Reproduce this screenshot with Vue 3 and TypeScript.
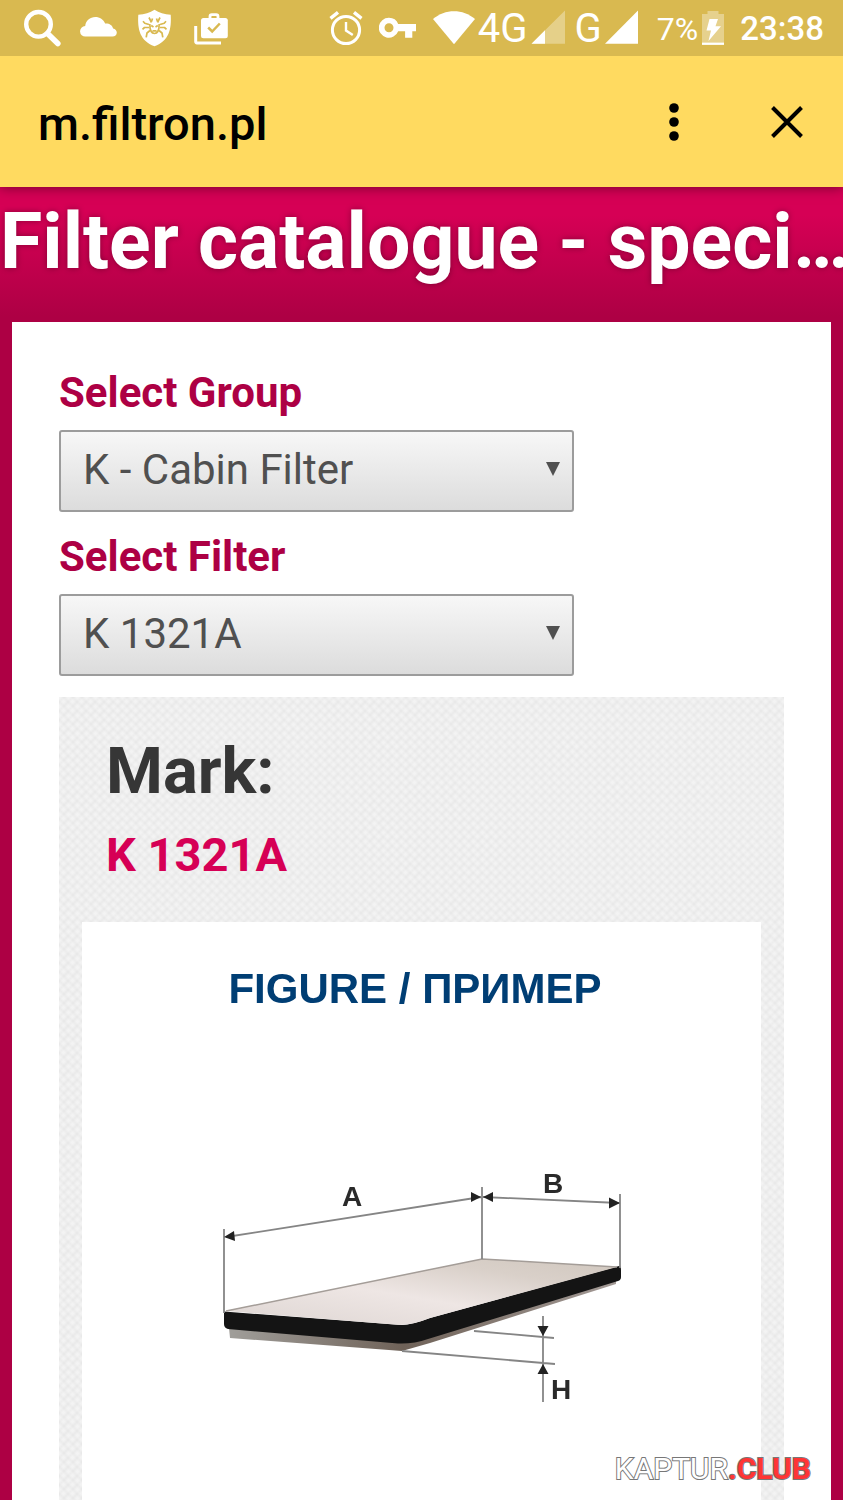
<script setup lang="ts">
import { ref } from 'vue'

interface Field {
  id: string
  label: string
  options: string[]
}

const fields: Field[] = [
  { id: 'group', label: 'Select Group', options: ['K - Cabin Filter'] },
  { id: 'filter', label: 'Select Filter', options: ['K 1321A'] },
]

const values = ref<Record<string, string>>({
  group: 'K - Cabin Filter',
  filter: 'K 1321A',
})

const legs = [0, 1]
</script>

<template>
  <div class="screen">
    <div class="status">
      <div class="notices">
        <svg viewBox="24 9 38 38" width="38" height="38" fill="none" stroke="#fff">
          <circle cx="38.5" cy="24.3" r="12.3" stroke-width="4.4" />
          <path d="M47.5 33.5L57.8 43.6" stroke-width="5.6" stroke-linecap="round" />
        </svg>
        <svg viewBox="80 9 38 38" width="38" height="38" fill="#fff">
          <path d="M85.5 36.6a5.3 5.3 0 0 1-.3-10.6C85.800 20.500 90 17 95.300 17c4.500 0 8.200 2.600 9.800 6.500 4.300-.3 7.300 1.800 8 4.900 2.200.4 3.700 2 3.700 4.100 0 2.400-1.800 4.100-4.300 4.100z" />
        </svg>
        <svg viewBox="136 9 38 38" width="38" height="38">
          <path d="M154.500 9.800c4.500 3.100 10 4.600 16.200 5 .9 14.500-1.500 26-16.200 31.500-14.700-5.500-17.100-17-16.200-31.500 6.200-.4 11.700-1.900 16.200-5z" fill="#fff" />
          <g fill="none" stroke="#d9b950" stroke-width="1.700" stroke-linejoin="round">
            <path
              v-for="leg in legs"
              :key="leg"
              :transform="leg ? 'translate(309 0) scale(-1 1)' : undefined"
              d="M149 24.500l-4.200-1.300-1.800-2M149.200 27.500h-4.700l-2 1.800M150 30.500l-3 2.500-.8 4.300M151.500 22.500l-2.500-5"
            />
            <path d="M149.800 24c0 6.500 2 9.500 4.700 9.500s4.700-3 4.700-9.500M151.200 25.500l2.300 1.500M157.800 25.500l-2.300 1.500M152.500 30.800h4" />
            <path d="M151.500 21.500l1-3M157.500 21.500l-1-3" />
          </g>
        </svg>
        <svg viewBox="192 9 38 38" width="38" height="38" fill="none">
          <path d="M195.700 26v15.600q0 1.300 1.300 1.300h24" stroke="#fff" stroke-width="3" />
          <path d="M210 19v-2.500q0-1.800 1.800-1.800h4.400q1.800 0 1.800 1.800V19" stroke="#fff" stroke-width="2.800" />
          <rect x="201" y="18" width="26.800" height="20.200" rx="2.500" fill="#fff" />
          <path d="M208.200 27.500l4 4 7.600-8" stroke="#d9b950" stroke-width="2.500" />
        </svg>
      </div>

      <div class="device">
        <svg class="alarm" viewBox="330 9 34 38" width="34" height="38" fill="none" stroke="#fff">
          <circle cx="347" cy="30" r="13.600" stroke-width="3" />
          <path d="M347 22v8.500l6.800 4.500" stroke-width="2.400" />
          <path d="M331.500 18.300l7.500-6M362.500 18.300l-7.500-6" stroke-width="3.400" />
        </svg>
        <svg class="key" viewBox="380 9 38 38" width="38" height="38" fill="#fff">
          <path fill-rule="evenodd" d="M390 17.700a10 10 0 0 1 9.200 6.300H417v7.200h-3.700v6.500h-7.200v-6.500h-6.900A10 10 0 1 1 390 17.700zm0 5.500a4.500 4.500 0 1 0 0 9 4.500 4.500 0 1 0 0-9z" />
        </svg>
        <svg class="wifi" viewBox="433 9 42 38" width="42" height="38" fill="#fff">
          <path d="M433 19c12-10.500 30-10.500 42 0l-21 25.300z" />
        </svg>
        <span class="network">4G</span>
        <svg class="signal" viewBox="529 9 34 38" width="34" height="38" fill="#fff">
          <path d="M529.500 43.700L563 10.500v33.200z" opacity=".33" />
          <path d="M529.500 43.700L543 30.300v13.400z" />
        </svg>
        <span class="network second">G</span>
        <svg class="signal" viewBox="604 9 34 38" width="34" height="38" fill="#fff">
          <path d="M604 43.700L637 10.500v33.200z" />
        </svg>
        <span class="percent">7%</span>
        <svg class="battery" viewBox="702 9 22 38" width="22" height="38" fill="#fff">
          <path d="M702 14h5.500v-3h11v3h5.500v28.500h-22z" opacity=".35" />
          <path d="M702 42.500h22v2.400h-22z" />
          <path d="M709.500 19h8.500l-2.500 7.300h5.500L708.500 41l2.500-10.500h-4.500z" />
        </svg>
        <span class="clock">23:38</span>
      </div>
    </div>

    <header class="bar">
      <span class="address">m.filtron.pl</span>
      <button class="tool" type="button" aria-label="Menu">
        <svg viewBox="0 0 40 40" width="40" height="40">
          <circle cx="20" cy="6" r="4.800" />
          <circle cx="20" cy="20" r="4.800" />
          <circle cx="20" cy="34" r="4.800" />
        </svg>
      </button>
      <button class="tool close" type="button" aria-label="Close">
        <svg viewBox="0 0 40 40" width="40" height="40" fill="none" stroke="#000" stroke-width="4">
          <path d="M5.500 5.500l29 29M34.500 5.500l-29 29" />
        </svg>
      </button>
    </header>

    <main class="page">
      <h1 class="title">Filter catalogue - speci…</h1>
      <section class="panel">
        <div v-for="field in fields" :key="field.id" class="field">
          <label :for="field.id">{{ field.label }}</label>
          <div class="picker">
            <select :id="field.id" v-model="values[field.id]">
              <option v-for="option in field.options" :key="option">{{ option }}</option>
            </select>
            <svg class="arrow" viewBox="0 0 14 14" width="14" height="14">
              <path d="M0 0h14L7 14z" fill="#505050" />
            </svg>
          </div>
        </div>

        <article class="card">
          <h2>Mark:</h2>
          <p class="mark">{{ values.filter }}</p>
          <div class="figure">
            <svg viewBox="82 922 679 578" role="img" aria-label="Cabin filter dimensions">
              <defs>
                <linearGradient id="sheet" x1="0" y1="1" x2="1" y2="0">
                  <stop offset="0" stop-color="#ddd5d2" />
                  <stop offset=".45" stop-color="#eee6e4" />
                  <stop offset=".75" stop-color="#d9d0c9" />
                  <stop offset="1" stop-color="#d0c7be" />
                </linearGradient>
                <linearGradient id="base" x1="0" y1="0" x2="1" y2="0">
                  <stop offset="0" stop-color="#a09e9a" />
                  <stop offset=".45" stop-color="#6f6258" />
                  <stop offset="1" stop-color="#a39a96" />
                </linearGradient>
              </defs>
              <g class="soft">
                <text class="caption" x="415" y="1003" text-anchor="middle">FIGURE / ПРИМЕР</text>
                <path d="M229 1328L404 1343 616 1276v8L430 1343 402 1351 230 1338z" fill="url(#base)" />
                <path d="M224 1311.500L402 1325 Q412 1325 430 1318L619 1266q2 0 2 4v7q0 3-3 4L428 1339q-14 5-30 4.500L228 1329q-4-1-4-5z" fill="#141414" />
                <path d="M226 1311L482 1259 617 1267 430 1318q-18 7-30 7z" fill="url(#sheet)" />
                <path d="M226 1311L482 1259 617 1267" fill="none" stroke="#a49d98" stroke-width="1.500" />
                <g fill="none" stroke="#858585" stroke-width="1.800">
                  <path d="M224 1229v84M482 1187v72M620 1194v74M226 1237L481 1197M483 1197L619 1203" />
                  <path d="M543 1316v86M474 1331L554 1338M402 1351L555 1364" />
                </g>
                <g fill="#222">
                  <path d="M224 1237l10-6 1 10zM481 1197l-10-5v10zM483 1197l10-5v10zM620 1203l-11-5.500v11zM543 1336l-5.500-10h11zM543 1364l-5.500 10h11z" />
                </g>
                <text class="letter" x="352" y="1206" text-anchor="middle">A</text>
                <text class="letter" x="553" y="1193" text-anchor="middle">B</text>
                <text class="letter" x="561" y="1399" text-anchor="middle">H</text>
              </g>
            </svg>
          </div>
        </article>
      </section>
    </main>

    <div class="watermark">KAPTUR<b>.CLUB</b></div>
  </div>
</template>

<style>
body {
  margin: 0;
  background: #ad0044;
}
</style>

<style scoped>
.screen {
  position: relative;
  display: flex;
  flex-direction: column;
  min-height: 100vh;
  overflow: hidden;
  background: #ad0044;
  font-family: Roboto, "Liberation Sans", sans-serif;
}
.screen svg {
  display: block;
  flex: none;
}
.status {
  position: relative;
  z-index: 2;
  display: flex;
  align-items: center;
  justify-content: space-between;
  height: 56px;
  padding: 0 19px 0 24px;
  background: #d9b950;
  color: #fff;
}
.notices {
  display: flex;
  gap: 18px;
}
.device {
  display: flex;
  align-items: center;
}
.key {
  margin-left: 16px;
}
.wifi {
  margin-left: 16px;
}
.network {
  margin: 0 3px;
  font-size: 40px;
  line-height: 56px;
}
.second {
  margin-left: 10px;
}
.percent {
  margin-left: 18px;
  font-size: 32px;
  line-height: 56px;
}
.battery {
  margin-left: 4px;
}
.clock {
  margin-left: 16px;
  font-size: 33px;
  line-height: 56px;
  font-weight: 500;
}
.percent,
.clock,
.network {
  padding-top: 2px;
}
.bar {
  position: relative;
  z-index: 1;
  display: flex;
  align-items: center;
  height: 131px;
  padding: 0 36px 0 38px;
  background: #ffda60;
  box-shadow: 0 0 12px rgba(0, 0, 0, 0.5);
}
.address {
  flex: 1;
  padding-top: 4px;
  font-size: 47px;
  line-height: 56px;
  font-weight: 500;
  color: #000;
}
.tool {
  padding: 0;
  border: 0;
  background: none;
}
.close {
  margin-left: 73px;
}
.page {
  display: flex;
  flex: 1;
  flex-direction: column;
  background: linear-gradient(#d60055 28px, #ad0044 130px);
}
.title {
  margin: 0;
  padding: 9px 0 34px;
  white-space: nowrap;
  font-size: 77px;
  line-height: 92px;
  font-weight: 700;
  color: #fff;
  text-shadow: 0 0 6px rgba(0, 0, 0, 0.35);
}
.panel {
  display: flex;
  flex: 1;
  flex-direction: column;
  margin: 0 12px;
  padding: 47px 47px 0;
  background: #fff;
}
.field {
  padding-bottom: 21px;
}
.field label {
  display: block;
  padding-bottom: 13px;
  font-size: 42px;
  line-height: 48px;
  font-weight: 700;
  color: #ad0044;
}
.picker {
  position: relative;
  width: 71%;
}
.picker select {
  display: block;
  width: 100%;
  height: 82px;
  padding: 0 48px 3px 22px;
  border: 2px solid #9c9c9c;
  border-radius: 3px;
  appearance: none;
  background: linear-gradient(#f7f7f7, #dcdcdc);
  font: 42px/48px Roboto, "Liberation Sans", sans-serif;
  color: #505050;
}
.arrow {
  position: absolute;
  top: 32px;
  right: 14px;
}
.card {
  flex: 1;
  padding: 36px 23px 0;
  background-color: #e9e9e9;
  background-image: radial-gradient(#f3f3f3 1px, transparent 4px), radial-gradient(#f3f3f3 1px, transparent 4px);
  background-position: 0 0, 5px 5px;
  background-size: 9px 9px;
}
.card h2 {
  margin: 0;
  padding-left: 24px;
  font-size: 65px;
  line-height: 76px;
  color: #363636;
}
.mark {
  margin: 0;
  padding: 18px 24px 39px;
  font-size: 47px;
  line-height: 56px;
  font-weight: 700;
  color: #d60055;
}
.figure {
  background: #fff;
}
.figure svg {
  width: 100%;
}
.soft {
  filter: blur(0.7px);
}
.caption {
  font: 700 42px "Liberation Sans", sans-serif;
  fill: #003e74;
}
.letter {
  font: 700 28px "Liberation Sans", sans-serif;
  fill: #2a2a2a;
}
.watermark {
  position: absolute;
  right: 32px;
  bottom: 12px;
  font-size: 30px;
  line-height: 38px;
  color: #fff;
  -webkit-text-stroke: 2px #777;
  paint-order: stroke fill;
}
.watermark b {
  font-weight: 700;
  color: #ff3535;
}
</style>
